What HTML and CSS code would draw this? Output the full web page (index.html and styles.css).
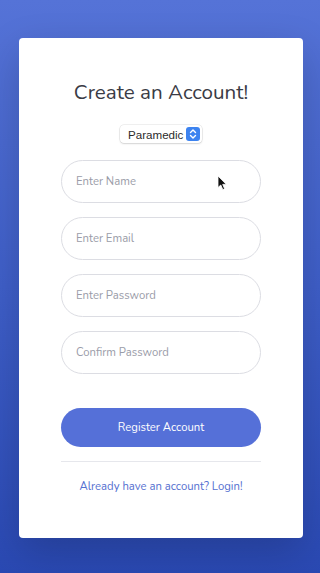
FILE: index.html
```html
<!DOCTYPE html>
<html lang="en">
<head>
<meta charset="utf-8">
<title>Create an Account</title>
<link rel="stylesheet" href="styles.css">
</head>
<body>
<div class="card">
  <h1 class="title">Create an Account!</h1>
  <div class="role-select">
    <span class="role-text">Paramedic</span>
    <span class="role-stepper">
      <svg width="14" height="14" viewBox="0 0 14 14"><path d="M4.5 5.5 L7 3 L9.5 5.5" fill="none" stroke="#fff" stroke-width="1.4" stroke-linecap="round" stroke-linejoin="round"/><path d="M4.5 8.5 L7 11 L9.5 8.5" fill="none" stroke="#fff" stroke-width="1.4" stroke-linecap="round" stroke-linejoin="round"/></svg>
    </span>
  </div>
  <form class="form">
    <input class="field" type="text" placeholder="Enter Name">
    <input class="field" type="email" placeholder="Enter Email">
    <input class="field" type="password" placeholder="Enter Password">
    <input class="field" type="password" placeholder="Confirm Password">
    <button class="btn" type="button">Register Account</button>
    <div class="divider"></div>
    <a class="login" href="#">Already have an account? Login!</a>
  </form>
</div>
<svg class="cursor" width="10" height="16" viewBox="0 0 10 16"><path d="M1 1 L1 12.5 L3.8 10 L5.8 14.6 L7.6 13.8 L5.7 9.4 L9.2 9.3 Z" fill="#111" stroke="#fff" stroke-width="0.8" stroke-linejoin="round"/></svg>
</body>
</html>
```

FILE: styles.css
```css
html, body {
  margin: 0;
  height: 100%;
}
body {
  background: linear-gradient(180deg, #5573d7 0%, #3f5fc9 50%, #2a49b3 100%);
  font-family: "Nunito", "Lato", "Open Sans", sans-serif;
  padding: 38px 17px 0 19px;
  box-sizing: border-box;
  position: relative;
}
.card {
  width: 284px;
  height: 500px;
  background: #fff;
  border-radius: 4px;
  box-shadow: 0 14px 40px rgba(0, 0, 0, 0.18);
  box-sizing: border-box;
  padding-top: 42px;
  display: flex;
  flex-direction: column;
  align-items: center;
}
.title {
  margin: 0;
  font-size: 20.6px;
  line-height: 24px;
  font-weight: 400;
  color: #3a3b45;
}
.role-select {
  margin-top: 21px;
  height: 18px;
  width: 82px;
  box-sizing: border-box;
  border-radius: 4px;
  background: #fff;
  box-shadow: 0 0 0 0.5px rgba(0,0,0,0.12), 0 1px 2px rgba(0,0,0,0.12);
  display: flex;
  align-items: center;
  justify-content: space-between;
  padding: 0 2px 0 8px;
  font-family: "Liberation Sans", "DejaVu Sans", sans-serif;
}
.role-text {
  font-size: 11.6px;
  color: #2b2b2b;
}
.role-stepper {
  width: 14px;
  height: 14px;
  border-radius: 3px;
  background: #3d83f0;
  display: flex;
}
.form {
  margin-top: 17px;
  width: 200px;
  display: flex;
  flex-direction: column;
  align-items: stretch;
}
.field {
  height: 43px;
  box-sizing: border-box;
  border: 1px solid #dcdde3;
  border-radius: 22px;
  padding: 0 14px;
  font-family: inherit;
  font-size: 11.3px;
  color: #6e707e;
  background: #fff;
  margin: 0 0 14px 0;
  outline: none;
}
.field::placeholder {
  color: #9a9ca8;
}
.btn {
  margin-top: 20px;
  height: 39px;
  border: none;
  border-radius: 20px;
  background: #5570d8;
  color: #fff;
  font-family: inherit;
  font-size: 11.3px;
}
.divider {
  margin-top: 14px;
  height: 1px;
  background: #e6e7ec;
}
.login {
  margin-top: 17px;
  text-align: center;
  font-size: 11.3px;
  line-height: 16px;
  color: #5570d0;
  text-decoration: none;
}
.cursor {
  position: absolute;
  left: 217px;
  top: 175px;
}
```
